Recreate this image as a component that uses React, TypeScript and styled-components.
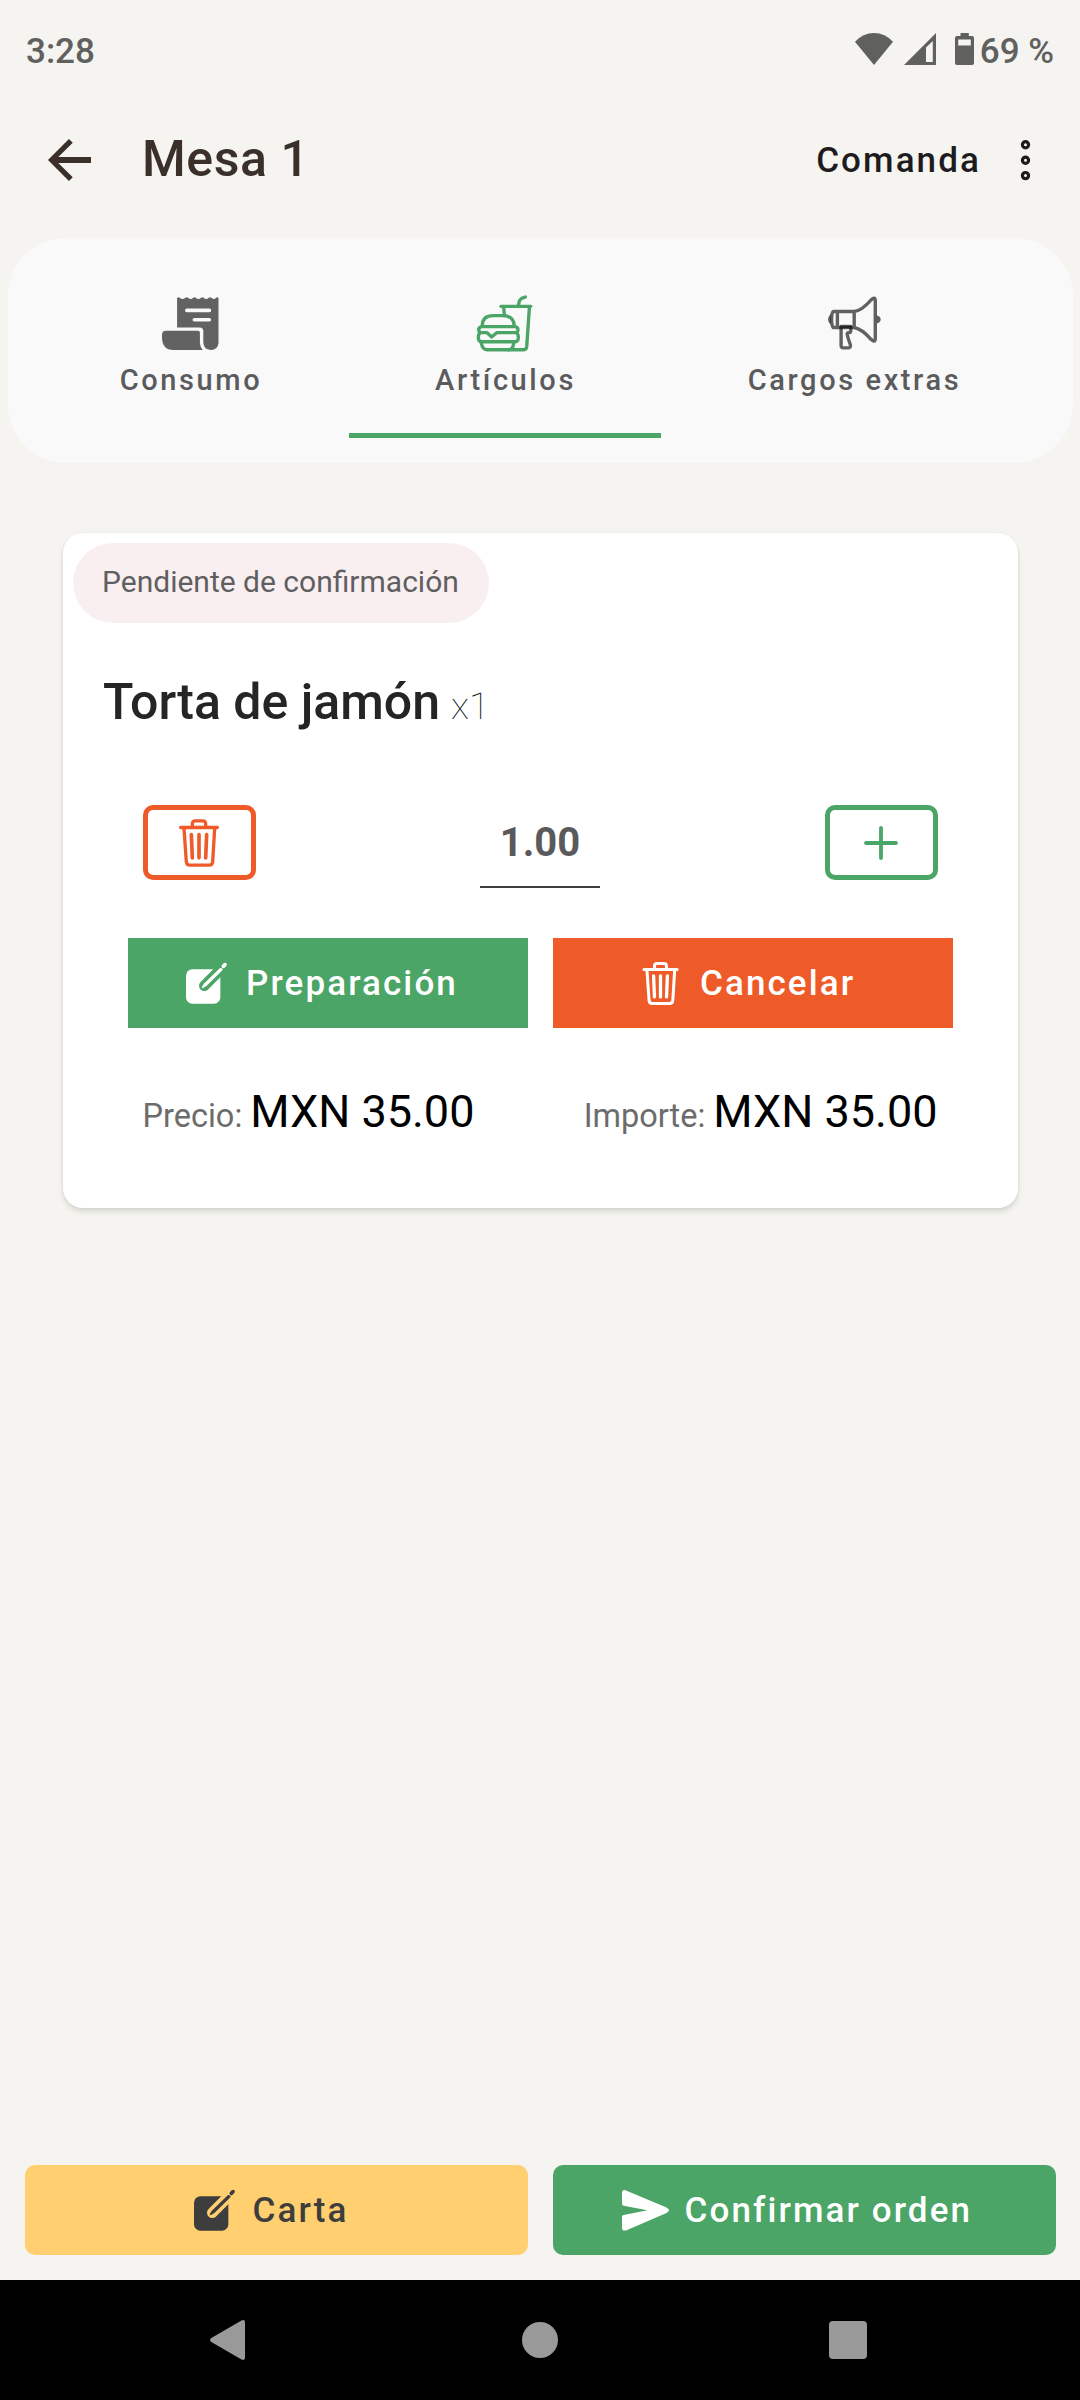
import React from "react";
import styled, { createGlobalStyle } from "styled-components";

const green = "#4ba567";
const orange = "#ef5a29";

const GlobalStyle = createGlobalStyle`
  * { box-sizing: border-box; }
  body { margin: 0; background: #f5f4f0; font-family: Roboto, "Noto Sans", sans-serif; }
  button { font: inherit; border: 0; padding: 0; background: none; color: inherit; }
  svg { display: block; flex: none; overflow: visible; }
`;

const Screen = styled.div`
  width: 1080px;
  height: 2400px;
  display: flex;
  flex-direction: column;
  background: #f5f4f0;
`;

const StatusBar = styled.div`
  height: 82px;
  padding: 19px 26px 0 26px;
  display: flex;
  align-items: center;
  color: #60605e;
  font-size: 35px;
  font-weight: 500;
  line-height: 42px;
`;

const Clock = styled.span`
  padding-top: 2px;
`;

const StatusIcons = styled.div`
  margin-left: auto;
  display: flex;
  align-items: center;
  padding-bottom: 3px;
`;

const Signal = styled.div`
  margin-left: 11px;
`;

const Battery = styled.div`
  display: flex;
  align-items: center;
  margin-left: 19px;
`;

const Percent = styled.span`
  margin-left: 6px;
  padding-top: 5px;
`;

const AppBar = styled.header`
  height: 156px;
  padding-left: 48px;
  padding-right: 49px;
  display: flex;
  align-items: center;
`;

const Title = styled.h1`
  margin: 0 0 3px 51px;
  font-size: 50px;
  font-weight: 500;
  letter-spacing: 0.6px;
  line-height: 60px;
  color: #3b3029;
`;

const OrderLink = styled.button`
  margin-left: auto;
  margin-right: 39px;
  padding-top: 1px;
  font-size: 35px;
  font-weight: 500;
  line-height: 44px;
  letter-spacing: 2.1px;
  color: #1d1b20;
`;

const Tabs = styled.nav`
  height: 225px;
  margin: 0 7px 0 8px;
  padding-left: 24px;
  display: flex;
  align-items: flex-start;
  border-radius: 58px;
  background: #f9f9f9;
`;

const Tab = styled.button<{ $width: number; $active?: boolean }>`
  width: ${(p) => p.$width}px;
  height: 200px;
  padding-top: 56px;
  display: flex;
  flex-direction: column;
  align-items: center;
  gap: 10px;
  border-bottom: 5px solid ${(p) => (p.$active ? green : "transparent")};
`;

const TabIcon = styled.span`
  height: 58px;
  display: flex;
  align-items: center;
`;

const TabLabel = styled.span`
  font-size: 29px;
  font-weight: 500;
  line-height: 36px;
  letter-spacing: 2.6px;
  padding-left: 1px;
  color: #5b5b5d;
`;

const Card = styled.section`
  height: 675px;
  margin: 70px 62px 0 63px;
  display: flex;
  flex-direction: column;
  border-radius: 20px;
  background: #fff;
  box-shadow: 0 4px 5px rgba(40, 50, 30, 0.13), 0 0 3px rgba(40, 50, 30, 0.06);
`;

const Pill = styled.div`
  width: 416px;
  height: 80px;
  margin: 10px 0 0 10px;
  padding: 0 0 4px 29px;
  display: flex;
  align-items: center;
  border-radius: 40px;
  background: #faeff0;
  font-size: 30px;
  color: #5f5f61;
  white-space: nowrap;
`;

const ItemHeading = styled.div`
  height: 60px;
  margin-top: 49px;
  padding-left: 40px;
  display: flex;
  align-items: baseline;
  gap: 11px;
`;

const ItemName = styled.h2`
  margin: 0;
  font-size: 50px;
  font-weight: 500;
  line-height: 60px;
  color: #252525;
`;

const ItemCount = styled.span`
  font-size: 37.5px;
  font-weight: 100;
  color: #1c1c1c;
`;

const Stepper = styled.div`
  height: 83px;
  margin: 73px 80px 0;
  display: flex;
  justify-content: space-between;
  align-items: flex-start;
`;

const StepButton = styled.button<{ $color: string }>`
  width: 113px;
  height: 75px;
  padding-right: 1px;
  display: flex;
  align-items: center;
  justify-content: center;
  border: 5px solid ${(p) => p.$color};
  border-radius: 10px;
  color: ${(p) => p.$color};
`;

const Quantity = styled.div`
  width: 120px;
  height: 83px;
  margin-right: 1px;
  border-bottom: 2px solid #3f3f3f;
  font-size: 40px;
  font-weight: 700;
  line-height: 75px;
  text-align: center;
  color: #5a5a5c;
`;

const CardActions = styled.div`
  margin: 50px 65px 0;
  display: grid;
  grid-template-columns: repeat(2, minmax(0, 1fr));
  gap: 25px;
`;

const Action = styled.button<{ $bg: string; $fg?: string; $inset: number; $gap: number; $radius?: number }>`
  height: 90px;
  padding-left: ${(p) => p.$inset}px;
  display: flex;
  align-items: center;
  gap: ${(p) => p.$gap}px;
  border-radius: ${(p) => p.$radius ?? 0}px;
  background: ${(p) => p.$bg};
  color: ${(p) => p.$fg ?? "#fff"};
  font-size: 35px;
  font-weight: 500;
  line-height: 44px;
  letter-spacing: 2.1px;
  white-space: nowrap;
`;

const ActionLabel = styled.span`
  padding-top: 2px;
`;

const Totals = styled.div`
  margin: 54px 80.5px 0 79.5px;
  display: flex;
  justify-content: space-between;
`;

const Total = styled.div`
  display: flex;
  align-items: baseline;
  gap: 8px;
  line-height: 60px;
`;

const TotalLabel = styled.span`
  font-size: 32.5px;
  color: #6c6c6c;
`;

const TotalValue = styled.span`
  font-size: 45px;
  color: #000;
`;

const Footer = styled.footer`
  margin-top: auto;
  padding: 0 24px 25px 25px;
  display: grid;
  grid-template-columns: repeat(2, minmax(0, 1fr));
  gap: 25px;
`;

const NavBar = styled.div`
  height: 120px;
  padding-left: 210px;
  display: flex;
  align-items: center;
  background: #000;
`;

const HomeDot = styled.div`
  width: 36px;
  height: 36px;
  margin: 0 271px 0 277px;
  border-radius: 50%;
  background: #999;
`;

const RecentSquare = styled.div`
  width: 38px;
  height: 38px;
  border-radius: 4px;
  background: #999;
`;

const EditIcon = () => (
  <svg width="41" height="41" viewBox="0 0 123 123" fill="none">
    <mask id="pen-gap" maskUnits="userSpaceOnUse" x="0" y="0" width="130" height="130">
      <rect width="130" height="130" fill="#fff" />
      <path d="M55 68L120 3" stroke="#000" strokeWidth="32" strokeLinecap="round" />
    </mask>
    <rect y="19" width="103" height="103" rx="19" fill="currentColor" mask="url(#pen-gap)" />
    <path d="M47 76Q48 68 55 61L102 15Q110 14 110 21L62 68Q54 75 47 76Z" fill="currentColor" />
    <path d="M112 10L117 5" stroke="currentColor" strokeWidth="11" strokeLinecap="round" />
  </svg>
);

const TrashIcon = ({ width, height }: { width: number; height: number }) => (
  <svg width={width} height={height} viewBox="0 0 120 143" fill="none" stroke="currentColor" strokeWidth="10" strokeLinecap="round" strokeLinejoin="round">
    <path d="M5 25H115" />
    <path d="M40 23V14Q40 5 49 5H71Q80 5 80 14V23" />
    <path d="M15 28L22 128Q23 138 33 138H90Q100 138 101 128L107 28" />
    <path d="M37 46L40 116M60 46V116M83 46L80 116" strokeWidth="11" />
  </svg>
);

const ReceiptIcon = () => (
  <svg width="56.5" height="53" viewBox="0 0 56.5 53" fill="#626262">
    <path
      fillRule="evenodd"
      d="M15.1 1Q16.2-.5 17.8 .7Q19.2 2 20.8 2Q22 2 23.3 .8Q24.6-.2 26 .8Q27.6 2 28.8 2Q30 2 31.2 .8Q32.4-.2 33.8 .8Q35.2 2 36.5 2Q37.8 2 39 .8Q40.2-.2 41.6 .8Q43 2 44.2 2Q45.4 2 46.8 .8Q48.2-.2 49.4 .8Q50.8 2 52 2Q53 2 54 .7Q55.6-.5 56.5 1V46Q55.8 53 48.8 53Q41.3 52.6 41.3 45V34Q41.3 30.4 37.7 30.4H15.1ZM24.8 11.6Q23 11.8 23 13.4Q23 15 24.8 15.2H47.5Q49.2 15 49.2 13.4Q49.2 11.8 47.5 11.6ZM32.2 20.9Q30.5 21.2 30.5 22.8Q30.5 24.4 32.2 24.6H47.5Q49.2 24.4 49.2 22.8Q49.2 21.2 47.5 20.9Z"
    />
    <path d="M4 33.7H35.8Q37.9 33.7 37.9 35.8V45.5Q37.9 50 40.8 53H11.5Q0 53 0 40V37.5Q0 33.7 4 33.7Z" />
  </svg>
);

const BurgerIcon = () => (
  <svg width="55.4" height="56.4" viewBox="52 44 166 169" fill="none" stroke={green} strokeWidth="10" strokeLinecap="round" strokeLinejoin="round">
    <path d="M176 75L179 62Q181 57 186 54L197 50" />
    <path d="M124 78H213" />
    <path d="M132 82L134 103M209 82L201 199Q200 208 191 208H82Q68 208 65 188" />
    <path d="M68 135Q68 106 102 106H128Q163 106 163 135" />
    <path d="M64 139H168Q175 142 175 148Q175 154 168 157H111L96 170L82 157H64Q57 154 57 148Q57 142 64 139Z" />
    <path d="M62 157Q56 161 56 171Q56 184 68 184H164Q176 184 176 171Q176 161 170 157" />
    <path d="M162 188Q160 208 146 208" />
  </svg>
);

const MegaphoneIcon = () => (
  <svg width="52.7" height="52.6" viewBox="0 0 52.7 52.6" fill="none" stroke="rgba(0,0,0,.61)" strokeWidth="3.4" strokeLinejoin="round">
    <path d="M26.2 14.5H5.2Q3.6 16 3.6 22.3Q3.6 28.8 5.2 30.5H26.2ZM9.4 14.5V30.5M26.2 14.5Q34 13.5 43 3Q47.3-1 47.3 4V41Q47.3 46.5 43 42.3Q34 32 26.2 30.5" />
    <path d="M2.6 17.2Q0 19 0 22.3Q0 25.8 2.6 27.6ZM48.9 18.4Q52.7 19.3 52.7 22.3Q52.7 25.5 48.9 26.6Z" fill="rgba(0,0,0,.61)" stroke="none" />
    <path d="M13.1 29.5V48.5Q13.1 50.9 15.4 50.9H19.8Q23.2 50.9 22.4 47.8Q20 41.5 19.2 37.2Q19 35.7 20.8 35.6Q22.8 35.6 22.8 33.4V29.5Z" />
  </svg>
);

const SendIcon = () => (
  <svg width="47" height="41" viewBox="0 0 47 41" fill="currentColor">
    <path d="M0 3Q0-.8 4 .4L44 17.3Q50 20.3 44 23.2L4 40.4Q0 41.4 0 37.7V26.8Q0 25.3 1.6 25L25.5 20.3L1.6 15.8Q0 15.3 0 13.8Z" />
  </svg>
);

export default function App() {
  return (
    <>
      <GlobalStyle />
      <Screen>
        <StatusBar>
          <Clock>3:28</Clock>
          <StatusIcons>
            <svg width="38" height="32" viewBox="0 0 38 32" fill="currentColor">
              <path d="M0 8.8Q8 0 19 0Q30 0 38 8.8L19 32Z" />
            </svg>
            <Signal>
              <svg width="32" height="32" viewBox="0 0 32 32" fill="currentColor">
                <path fillRule="evenodd" d="M32 0V32H0ZM28.8 8L22 14.6V29H28.8Z" />
              </svg>
            </Signal>
            <Battery>
              <svg width="19" height="32" viewBox="0 0 19 32" fill="currentColor">
                <path fillRule="evenodd" d="M5.5 0H13.8V3H17Q19 3 19 5V30Q19 32 17 32H2Q0 32 0 30V5Q0 3 2 3H5.5ZM3.2 6.5V12.4H15.8V6.5Z" />
              </svg>
              <Percent>69 %</Percent>
            </Battery>
          </StatusIcons>
        </StatusBar>

        <AppBar>
          <svg width="43" height="42" viewBox="4 4 16 16" preserveAspectRatio="none" fill="#3b3029">
            <path d="M20 10.9H7.83l5.39-5.49L11.8 4l-7.8 8 7.8 8 1.41-1.41L7.83 13.1H20v-2.2z" />
          </svg>
          <Title>Mesa 1</Title>
          <OrderLink>Comanda</OrderLink>
          <svg width="11" height="42" viewBox="0 0 11 42" fill="none" stroke="#1d1b20" strokeWidth="3.2">
            <circle cx="5.5" cy="5.7" r="3.1" />
            <circle cx="5.5" cy="21.2" r="3.1" />
            <circle cx="5.5" cy="36.6" r="3.1" />
          </svg>
        </AppBar>

        <Tabs>
          <Tab $width={317}>
            <TabIcon><ReceiptIcon /></TabIcon>
            <TabLabel>Consumo</TabLabel>
          </Tab>
          <Tab $width={312} $active>
            <TabIcon><BurgerIcon /></TabIcon>
            <TabLabel>Artículos</TabLabel>
          </Tab>
          <Tab $width={386}>
            <TabIcon><MegaphoneIcon /></TabIcon>
            <TabLabel>Cargos extras</TabLabel>
          </Tab>
        </Tabs>

        <Card>
          <Pill>Pendiente de confirmación</Pill>
          <ItemHeading>
            <ItemName>Torta de jamón</ItemName>
            <ItemCount>x1</ItemCount>
          </ItemHeading>
          <Stepper>
            <StepButton $color={orange}><TrashIcon width={40} height={48} /></StepButton>
            <Quantity>1.00</Quantity>
            <StepButton $color={green}>
              <svg width="34" height="34" viewBox="0 0 34 34" stroke="currentColor" strokeWidth="3.8" strokeLinecap="round">
                <path d="M17 2V32M2 17H32" />
              </svg>
            </StepButton>
          </Stepper>
          <CardActions>
            <Action $bg={green} $inset={58} $gap={19}><EditIcon /><ActionLabel>Preparación</ActionLabel></Action>
            <Action $bg={orange} $inset={89} $gap={21}><TrashIcon width={37} height={43} /><ActionLabel>Cancelar</ActionLabel></Action>
          </CardActions>
          <Totals>
            <Total><TotalLabel>Precio:</TotalLabel><TotalValue>MXN 35.00</TotalValue></Total>
            <Total><TotalLabel>Importe:</TotalLabel><TotalValue>MXN 35.00</TotalValue></Total>
          </Totals>
        </Card>

        <Footer>
          <Action $bg="#ffcf70" $fg="#3d3d3d" $inset={169} $gap={17.5} $radius={10}><EditIcon /><ActionLabel>Carta</ActionLabel></Action>
          <Action $bg={green} $inset={69} $gap={15.5} $radius={10}><SendIcon /><ActionLabel>Confirmar orden</ActionLabel></Action>
        </Footer>

        <NavBar>
          <svg width="35" height="40" viewBox="0 0 35 40" fill="#999">
            <path d="M1.3 18L31.5 .5Q35-1 35 2.5V37.5Q35 41 31.5 39.5L1.3 22Q-1.2 20 1.3 18Z" />
          </svg>
          <HomeDot />
          <RecentSquare />
        </NavBar>
      </Screen>
    </>
  );
}
